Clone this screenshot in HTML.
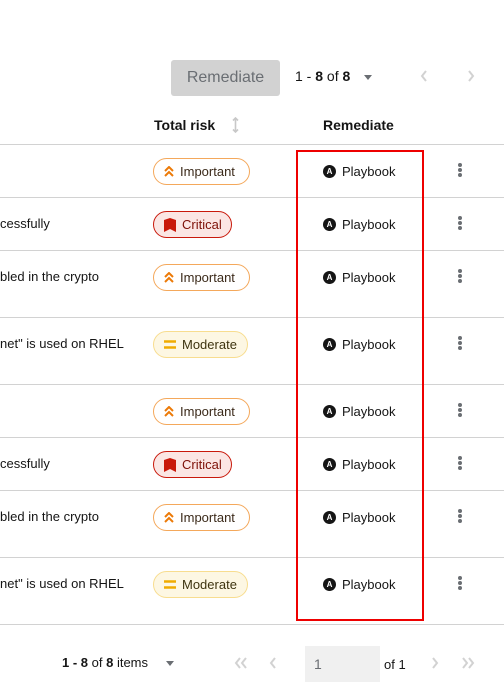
<!DOCTYPE html>
<html><head><style>
body{margin:0;width:504px;height:698px;background:#fff;font-family:"Liberation Sans",sans-serif;color:#151515;position:relative;overflow:hidden;font-size:13px}
.a{position:absolute}
.hr{position:absolute;left:0;width:504px;height:1px;background:#d2d2d2}
.lab{position:absolute;left:153px;height:27px;border-radius:14px;border:1px solid;box-sizing:border-box;display:flex;align-items:center;padding:0 9px 0 10px;font-size:13px}
.lab svg{margin-right:6px}
.imp{border-color:#f4a85b;color:#3b2a1a;width:97px}
.crit{border-color:#c9190b;background:#fbe6e4;color:#7d1007;width:79px}
.mod{border-color:#f8dd8f;background:#fdf7e3;color:#3e3410;width:95px}
.pb{position:absolute;left:323px;display:flex;align-items:center;font-size:13px}
.pb i{width:13px;height:13px;border-radius:50%;background:#151515;margin-right:6px;color:#fff;font-size:8px;font-style:normal;font-weight:bold;text-align:center;line-height:13px}
.k{position:absolute;left:458px;width:4px}
.k b{display:block;width:4px;height:4px;border-radius:50%;background:#6a6e73;margin-bottom:1px}
.t{position:absolute;left:0;font-size:13px}
.g{position:absolute;color:#d2d2d2}
</style></head><body>
<div class="a" style="left:171px;top:60px;width:109px;height:36px;background:#d2d2d2;border-radius:3px;color:#6a6e73;font-size:16px;text-align:center;line-height:36px">Remediate</div>
<div class="a" style="left:295px;top:68px;font-size:14px">1 - <b>8</b> of <b>8</b></div>
<div class="a" style="left:364px;top:75px;border:4px solid transparent;border-top:5px solid #6a6e73"></div>
<svg class="a" style="left:420px;top:70px" width="8" height="12"><path d="M6 1L2 6l4 5" stroke="#d2d2d2" stroke-width="2" fill="none"/></svg>
<svg class="a" style="left:467px;top:70px" width="8" height="12"><path d="M2 1l4 5-4 5" stroke="#d2d2d2" stroke-width="2" fill="none"/></svg>
<div class="a" style="left:154px;top:117px;font-weight:bold;font-size:14px">Total risk</div>
<svg class="a" style="left:232px;top:117px" width="7" height="16"><path d="M3.5 1v14M1 3.5l2.5-2.5 2.5 2.5M1 12.5l2.5 2.5 2.5-2.5" stroke="#c8c8c8" stroke-width="1.6" fill="none"/></svg>
<div class="a" style="left:323px;top:117px;font-weight:bold;font-size:14px">Remediate</div>
<div class="hr" style="top:144px"></div>
<div class="hr" style="top:197px"></div>
<div class="hr" style="top:250px"></div>
<div class="hr" style="top:317px"></div>
<div class="hr" style="top:384px"></div>
<div class="hr" style="top:437px"></div>
<div class="hr" style="top:490px"></div>
<div class="hr" style="top:557px"></div>
<div class="hr" style="top:624px"></div>

<svg width="0" height="0" style="position:absolute"><defs>
<symbol id="i" viewBox="0 0 10 12"><path d="M1 5l4-4 4 4M1 10l4-4 4 4" stroke="#ec7a08" stroke-width="2" fill="none"/></symbol>
<symbol id="c" viewBox="0 0 12 14"><path d="M0 2L6 0l6 2v12l-6-3-6 3z" fill="#c9190b"/></symbol>
<symbol id="m" viewBox="0 0 12 10"><path d="M0 1.5h12M0 7.5h12" stroke="#f0ab00" stroke-width="2.5"/></symbol>
</defs></svg>

<div class="lab imp" style="top:158px"><svg width="10" height="12"><use href="#i"/></svg>Important</div>
<div class="t" style="top:216px">cessfully</div>
<div class="lab crit" style="top:211px"><svg width="12" height="14"><use href="#c"/></svg>Critical</div>
<div class="t" style="top:269px">bled in the crypto</div>
<div class="lab imp" style="top:264px"><svg width="10" height="12"><use href="#i"/></svg>Important</div>
<div class="t" style="top:336px">net" is used on RHEL</div>
<div class="lab mod" style="top:331px"><svg width="12" height="10"><use href="#m"/></svg>Moderate</div>
<div class="lab imp" style="top:398px"><svg width="10" height="12"><use href="#i"/></svg>Important</div>
<div class="t" style="top:456px">cessfully</div>
<div class="lab crit" style="top:451px"><svg width="12" height="14"><use href="#c"/></svg>Critical</div>
<div class="t" style="top:509px">bled in the crypto</div>
<div class="lab imp" style="top:504px"><svg width="10" height="12"><use href="#i"/></svg>Important</div>
<div class="t" style="top:576px">net" is used on RHEL</div>
<div class="lab mod" style="top:571px"><svg width="12" height="10"><use href="#m"/></svg>Moderate</div>

<div class="pb" style="top:164px"><i>A</i>Playbook</div>
<div class="pb" style="top:217px"><i>A</i>Playbook</div>
<div class="pb" style="top:270px"><i>A</i>Playbook</div>
<div class="pb" style="top:337px"><i>A</i>Playbook</div>
<div class="pb" style="top:404px"><i>A</i>Playbook</div>
<div class="pb" style="top:457px"><i>A</i>Playbook</div>
<div class="pb" style="top:510px"><i>A</i>Playbook</div>
<div class="pb" style="top:577px"><i>A</i>Playbook</div>

<div class="k" style="top:163px"><b></b><b></b><b></b></div>
<div class="k" style="top:216px"><b></b><b></b><b></b></div>
<div class="k" style="top:269px"><b></b><b></b><b></b></div>
<div class="k" style="top:336px"><b></b><b></b><b></b></div>
<div class="k" style="top:403px"><b></b><b></b><b></b></div>
<div class="k" style="top:456px"><b></b><b></b><b></b></div>
<div class="k" style="top:509px"><b></b><b></b><b></b></div>
<div class="k" style="top:576px"><b></b><b></b><b></b></div>

<div class="a" style="left:296px;top:150px;width:124px;height:467px;border:2px solid #e00"></div>

<div class="a" style="left:62px;top:655px;font-size:13px"><b>1 - 8</b> of <b>8</b> items</div>
<div class="a" style="left:166px;top:661px;border:4px solid transparent;border-top:5px solid #6a6e73"></div>
<svg class="a" style="left:234px;top:657px" width="14" height="12"><path d="M6 1L2 6l4 5M12 1L8 6l4 5" stroke="#d2d2d2" stroke-width="2" fill="none"/></svg>
<svg class="a" style="left:269px;top:657px" width="8" height="12"><path d="M6 1L2 6l4 5" stroke="#d2d2d2" stroke-width="2" fill="none"/></svg>
<div class="a" style="left:305px;top:646px;width:75px;height:36px;background:#f0f0f0;color:#6a6e73;font-size:14px;line-height:36px;padding-left:9px;box-sizing:border-box">1</div>
<div class="a" style="left:384px;top:657px;font-size:13px">of 1</div>
<svg class="a" style="left:431px;top:657px" width="8" height="12"><path d="M2 1l4 5-4 5" stroke="#d2d2d2" stroke-width="2" fill="none"/></svg>
<svg class="a" style="left:461px;top:657px" width="14" height="12"><path d="M2 1l4 5-4 5M8 1l4 5-4 5" stroke="#d2d2d2" stroke-width="2" fill="none"/></svg>
</body></html>
